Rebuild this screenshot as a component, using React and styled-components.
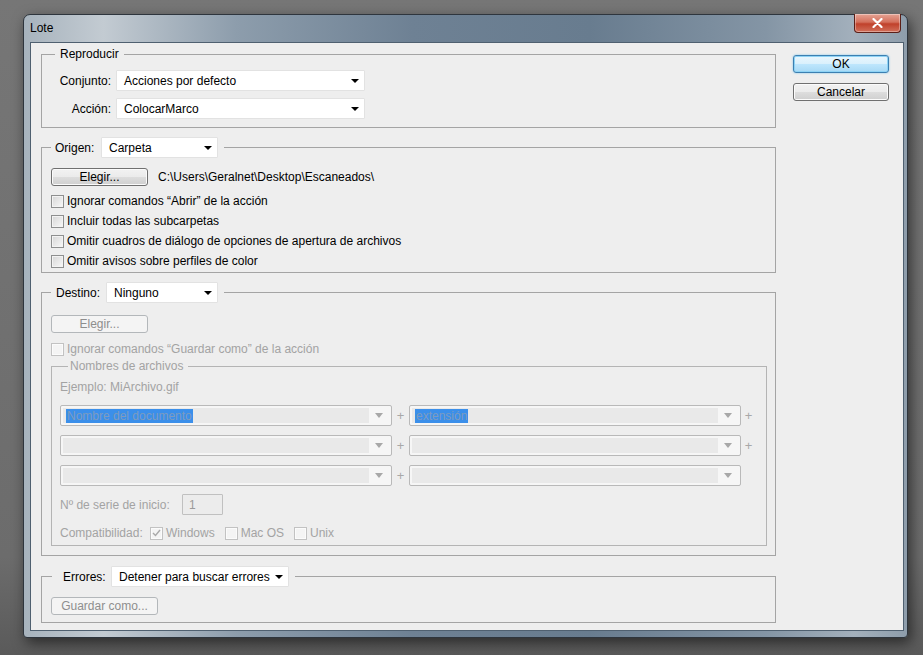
import styled, { createGlobalStyle } from "styled-components";

const GlobalStyle = createGlobalStyle`
  html, body {
    margin: 0;
    padding: 0;
  }
  body {
    background: #6f6f6f;
    font-family: "Liberation Sans", Arial, sans-serif;
    font-size: 12px;
    color: #000;
  }
`;

const Desktop = styled.div`
  width: 923px;
  height: 655px;
  box-sizing: border-box;
  padding: 14px 0 0 23px;
  background: linear-gradient(#767676, #6c6c6c 85%, #5a5a5a);
  overflow: hidden;
`;

const Window = styled.div`
  width: 885px;
  box-sizing: border-box;
  border: 1px solid #2e353d;
  border-radius: 7px 7px 4px 4px;
  padding: 0 3px 6px 6px;
  background: linear-gradient(
    90deg,
    #a7b3bd 0%,
    #c3cbd2 9%,
    #8d9dac 24%,
    #6e8194 44%,
    #687c8f 64%,
    #8495a5 84%,
    #a3b0bc 94%,
    #8e9dab 100%
  );
  box-shadow: 3px 5px 14px rgba(0, 0, 0, 0.55);
`;

const TitleBar = styled.div`
  height: 27px;
  display: flex;
  align-items: center;
  justify-content: space-between;
`;

const Title = styled.span`
  font-family: "Liberation Sans", Arial, sans-serif;
  font-size: 12px;
  color: #000;
  padding-bottom: 1px;
`;

const CloseButton = styled.div`
  align-self: flex-start;
  margin-top: -1px;
  margin-right: 3px;
  width: 47px;
  height: 19px;
  box-sizing: border-box;
  border: 1px solid #5b1f18;
  border-top: none;
  border-radius: 0 0 4px 4px;
  background: linear-gradient(#e5a394 0%, #d4705c 45%, #c0412b 55%, #d1705b 100%);
  box-shadow: inset 0 0 0 1px rgba(255, 255, 255, 0.35);
  display: flex;
  align-items: center;
  justify-content: center;
`;

const Client = styled.div`
  height: 589px;
  box-sizing: border-box;
  border: 1px solid #4f6070;
  background: #eeeeee;
  padding: 4px 13px 5px 10px;
  display: flex;
  gap: 17px;
`;

const MainCol = styled.div`
  width: 735px;
  display: flex;
  flex-direction: column;
`;

const ButtonCol = styled.div`
  width: 96px;
  padding-top: 8px;
  display: flex;
  flex-direction: column;
  gap: 10px;
`;

const Group = styled.fieldset`
  margin: ${(p) => p.$margin || "0"};
  padding: ${(p) => p.$pad || "0"};
  border: 1px solid ${(p) => (p.$muted ? "#b4b4b4" : "#a4a4a4")};
  min-width: 0;
`;

const Legend = styled.legend`
  margin-left: ${(p) => p.$offset}px;
  padding: ${(p) => p.$pad || "0 5px"};
  line-height: 14px;
  color: ${(p) => (p.$disabled ? "#a3a3a3" : "#000")};
  display: flex;
  align-items: center;
`;

const LegendLabel = styled.span`
  width: ${(p) => p.$w}px;
  white-space: nowrap;
`;

const FormGrid = styled.div`
  display: grid;
  grid-template-columns: 69px 249px;
  column-gap: 5px;
  row-gap: 7px;
  align-items: center;
`;

const FieldLabel = styled.span`
  text-align: right;
`;

const SelectBox = styled.div`
  width: ${(p) => p.$w}px;
  height: 21px;
  box-sizing: border-box;
  background: #fff;
  border: 1px solid #e2e2e2;
  border-radius: 1px;
  display: flex;
  align-items: center;
  justify-content: space-between;
  padding: 0 5px 0 ${(p) => p.$padLeft || 7}px;
  white-space: nowrap;
`;

const Arrow = styled.svg`
  flex: none;
`;

const Combo = styled.div`
  width: 332px;
  height: 21px;
  box-sizing: border-box;
  border: 1px solid #b9b9b9;
  border-radius: 2px;
  background: #f6f6f6;
  padding: 2px;
  display: flex;
  align-items: stretch;
`;

const ComboField = styled.div`
  flex: 1;
  background: #e9e9e9;
  display: flex;
  align-items: center;
  padding-left: 3px;
`;

const ComboArrow = styled.div`
  width: 20px;
  display: flex;
  align-items: center;
  justify-content: center;
`;

const Highlight = styled.span`
  background: #3b8fea;
  color: #7d9bbf;
  padding: 0 1px;
  line-height: 14px;
`;

const Plus = styled.span`
  width: ${(p) => p.$w || 17}px;
  text-align: center;
  color: #a8a8a8;
  font-size: 13px;
`;

const ComboRow = styled.div`
  display: flex;
  align-items: center;
`;

const ComboStack = styled.div`
  margin-top: 11px;
  display: flex;
  flex-direction: column;
  gap: 9px;
`;

const Button = styled.div`
  width: ${(p) => p.$w}px;
  height: 18px;
  box-sizing: border-box;
  border-radius: 3px;
  display: flex;
  align-items: center;
  justify-content: center;
  flex: none;
  border: 1px solid ${(p) => (p.$primary ? "#3c7fb1" : p.$disabled ? "#b3b7ba" : "#707070")};
  color: ${(p) => (p.$disabled ? "#8e8e8e" : "#000")};
  background: ${(p) =>
    p.$primary
      ? "linear-gradient(#eaf6fd 0%, #d9f0fc 50%, #bee6fd 51%, #a7d9f5 100%)"
      : p.$disabled
      ? "#f4f4f4"
      : "linear-gradient(#f2f2f2 0%, #ebebeb 50%, #dddddd 51%, #cfcfcf 100%)"};
  box-shadow: ${(p) =>
    p.$primary
      ? "inset 0 0 0 1px #8ed3f5, 0 0 2px #6fc2ec"
      : p.$disabled
      ? "none"
      : "inset 0 0 0 1px #fbfbfb"};
`;

const Row = styled.div`
  display: flex;
  align-items: center;
  gap: ${(p) => p.$gap || 0}px;
  margin-top: ${(p) => p.$top || 0}px;
`;

const CheckList = styled.div`
  margin-top: ${(p) => p.$top || 5}px;
  display: flex;
  flex-direction: column;
`;

const CheckRow = styled.label`
  height: 20px;
  display: flex;
  align-items: center;
  gap: 3px;
  color: ${(p) => (p.$disabled ? "#a3a3a3" : "#000")};
  white-space: nowrap;
  margin-right: ${(p) => p.$space || 0}px;
`;

const Box = styled.span`
  width: 13px;
  height: 13px;
  box-sizing: border-box;
  flex: none;
  border: 1px solid ${(p) => (p.$disabled ? "#c2c2c2" : "#8e8f8f")};
  background: ${(p) =>
    p.$disabled ? "#f4f4f4" : "linear-gradient(135deg, #d6d6d6 0%, #eeeeee 70%, #fafafa 100%)"};
  box-shadow: inset 0 0 0 1px ${(p) => (p.$disabled ? "#fbfbfb" : "#f3f3f3")};
  display: flex;
  align-items: center;
  justify-content: center;
`;

const Muted = styled.span`
  color: #a3a3a3;
  width: ${(p) => (p.$w ? `${p.$w}px` : "auto")};
`;

const SmallInput = styled.div`
  width: 41px;
  height: 21px;
  box-sizing: border-box;
  border: 1px solid #c0c0c0;
  border-radius: 1px;
  background: #ececec;
  color: #9a9a9a;
  display: flex;
  align-items: center;
  padding-left: 6px;
`;

function DownArrow({ color = "#000" }) {
  return (
    <Arrow width="8" height="4" viewBox="0 0 8 4">
      <polygon points="0,0 8,0 4,4" fill={color} />
    </Arrow>
  );
}

function Select({ value, w }) {
  return (
    <SelectBox $w={w}>
      <span>{value}</span>
      <DownArrow />
    </SelectBox>
  );
}

function DisabledCombo({ children }) {
  return (
    <Combo>
      <ComboField>{children}</ComboField>
      <ComboArrow>
        <svg width="8" height="5" viewBox="0 0 8 5">
          <polygon points="0,0 8,0 4,5" fill="#a8a8a8" />
        </svg>
      </ComboArrow>
    </Combo>
  );
}

function Check({ label, disabled, checked, space }) {
  return (
    <CheckRow $disabled={disabled} $space={space}>
      <Box $disabled={disabled}>
        {checked && (
          <svg width="9" height="8" viewBox="0 0 9 8">
            <polyline points="1,4 3.5,6.5 8,1" fill="none" stroke="#a9a9a9" strokeWidth="1.4" />
          </svg>
        )}
      </Box>
      {label}
    </CheckRow>
  );
}

export default function App() {
  return (
    <>
      <GlobalStyle />
      <Desktop>
        <Window>
          <TitleBar>
            <Title>Lote</Title>
            <CloseButton>
              <svg width="11" height="10" viewBox="0 0 11 10">
                <path d="M1.5 1 L9.5 9 M9.5 1 L1.5 9" stroke="#fff" strokeWidth="2.2" strokeLinecap="round" />
              </svg>
            </CloseButton>
          </TitleBar>
          <Client>
            <MainCol>
              <Group $pad="9px 0 8px 0">
                <Legend $offset={13}>Reproducir</Legend>
                <FormGrid>
                  <FieldLabel>Conjunto:</FieldLabel>
                  <Select value="Acciones por defecto" w={249} />
                  <FieldLabel>Acción:</FieldLabel>
                  <Select value="ColocarMarco" w={249} />
                </FormGrid>
              </Group>

              <Group $margin="9px 0 0 0" $pad="10px 0 1px 9px">
                <Legend $offset={0} $pad="0 6px 0 4px">
                  <LegendLabel $w={46}>Origen:</LegendLabel>
                  <Select value="Carpeta" w={117} />
                </Legend>
                <Row $gap={10}>
                  <Button $w={97}>Elegir...</Button>
                  <span>C:\Users\Geralnet\Desktop\Escaneados\</span>
                </Row>
                <CheckList>
                  <Check label="Ignorar comandos “Abrir” de la acción" />
                  <Check label="Incluir todas las subcarpetas" />
                  <Check label="Omitir cuadros de diálogo de opciones de apertura de archivos" />
                  <Check label="Omitir avisos sobre perfiles de color" />
                </CheckList>
              </Group>

              <Group $margin="9px 0 0 0" $pad="12px 8px 0 9px">
                <Legend $offset={0} $pad="0 6px 0 5px">
                  <LegendLabel $w={50}>Destino:</LegendLabel>
                  <Select value="Ninguno" w={112} />
                </Legend>
                <Button $w={97} $disabled>
                  Elegir...
                </Button>
                <CheckList $top={6}>
                  <Check label="Ignorar comandos “Guardar como” de la acción" disabled />
                </CheckList>
                <Group $muted $margin="0 0 9px 0" $pad="7px 0 2px 8px">
                  <Legend $offset={8} $pad="0 5px 0 2px" $disabled>
                    Nombres de archivos
                  </Legend>
                  <Muted>Ejemplo: MiArchivo.gif</Muted>
                  <ComboStack>
                    <ComboRow>
                      <DisabledCombo>
                        <Highlight>Nombre del documento</Highlight>
                      </DisabledCombo>
                      <Plus>+</Plus>
                      <DisabledCombo>
                        <Highlight>extensión</Highlight>
                      </DisabledCombo>
                      <Plus $w={15}>+</Plus>
                    </ComboRow>
                    <ComboRow>
                      <DisabledCombo />
                      <Plus>+</Plus>
                      <DisabledCombo />
                      <Plus $w={15}>+</Plus>
                    </ComboRow>
                    <ComboRow>
                      <DisabledCombo />
                      <Plus>+</Plus>
                      <DisabledCombo />
                    </ComboRow>
                  </ComboStack>
                  <Row $top={8}>
                    <Muted $w={122}>Nº de serie de inicio:</Muted>
                    <SmallInput>1</SmallInput>
                  </Row>
                  <Row $top={8}>
                    <Muted $w={90}>Compatibilidad:</Muted>
                    <Check label="Windows" disabled checked space={10} />
                    <Check label="Mac OS" disabled space={10} />
                    <Check label="Unix" disabled />
                  </Row>
                </Group>
              </Group>

              <Group $margin="10px 0 0 0" $pad="10px 0 7px 9px">
                <Legend $offset={1} $pad="0 6px 0 11px">
                  <LegendLabel $w={48}>Errores:</LegendLabel>
                  <Select value="Detener para buscar errores" w={178} />
                </Legend>
                <Button $w={107} $disabled>
                  Guardar como...
                </Button>
              </Group>
            </MainCol>
            <ButtonCol>
              <Button $w={96} $primary>
                OK
              </Button>
              <Button $w={96}>Cancelar</Button>
            </ButtonCol>
          </Client>
        </Window>
      </Desktop>
    </>
  );
}
